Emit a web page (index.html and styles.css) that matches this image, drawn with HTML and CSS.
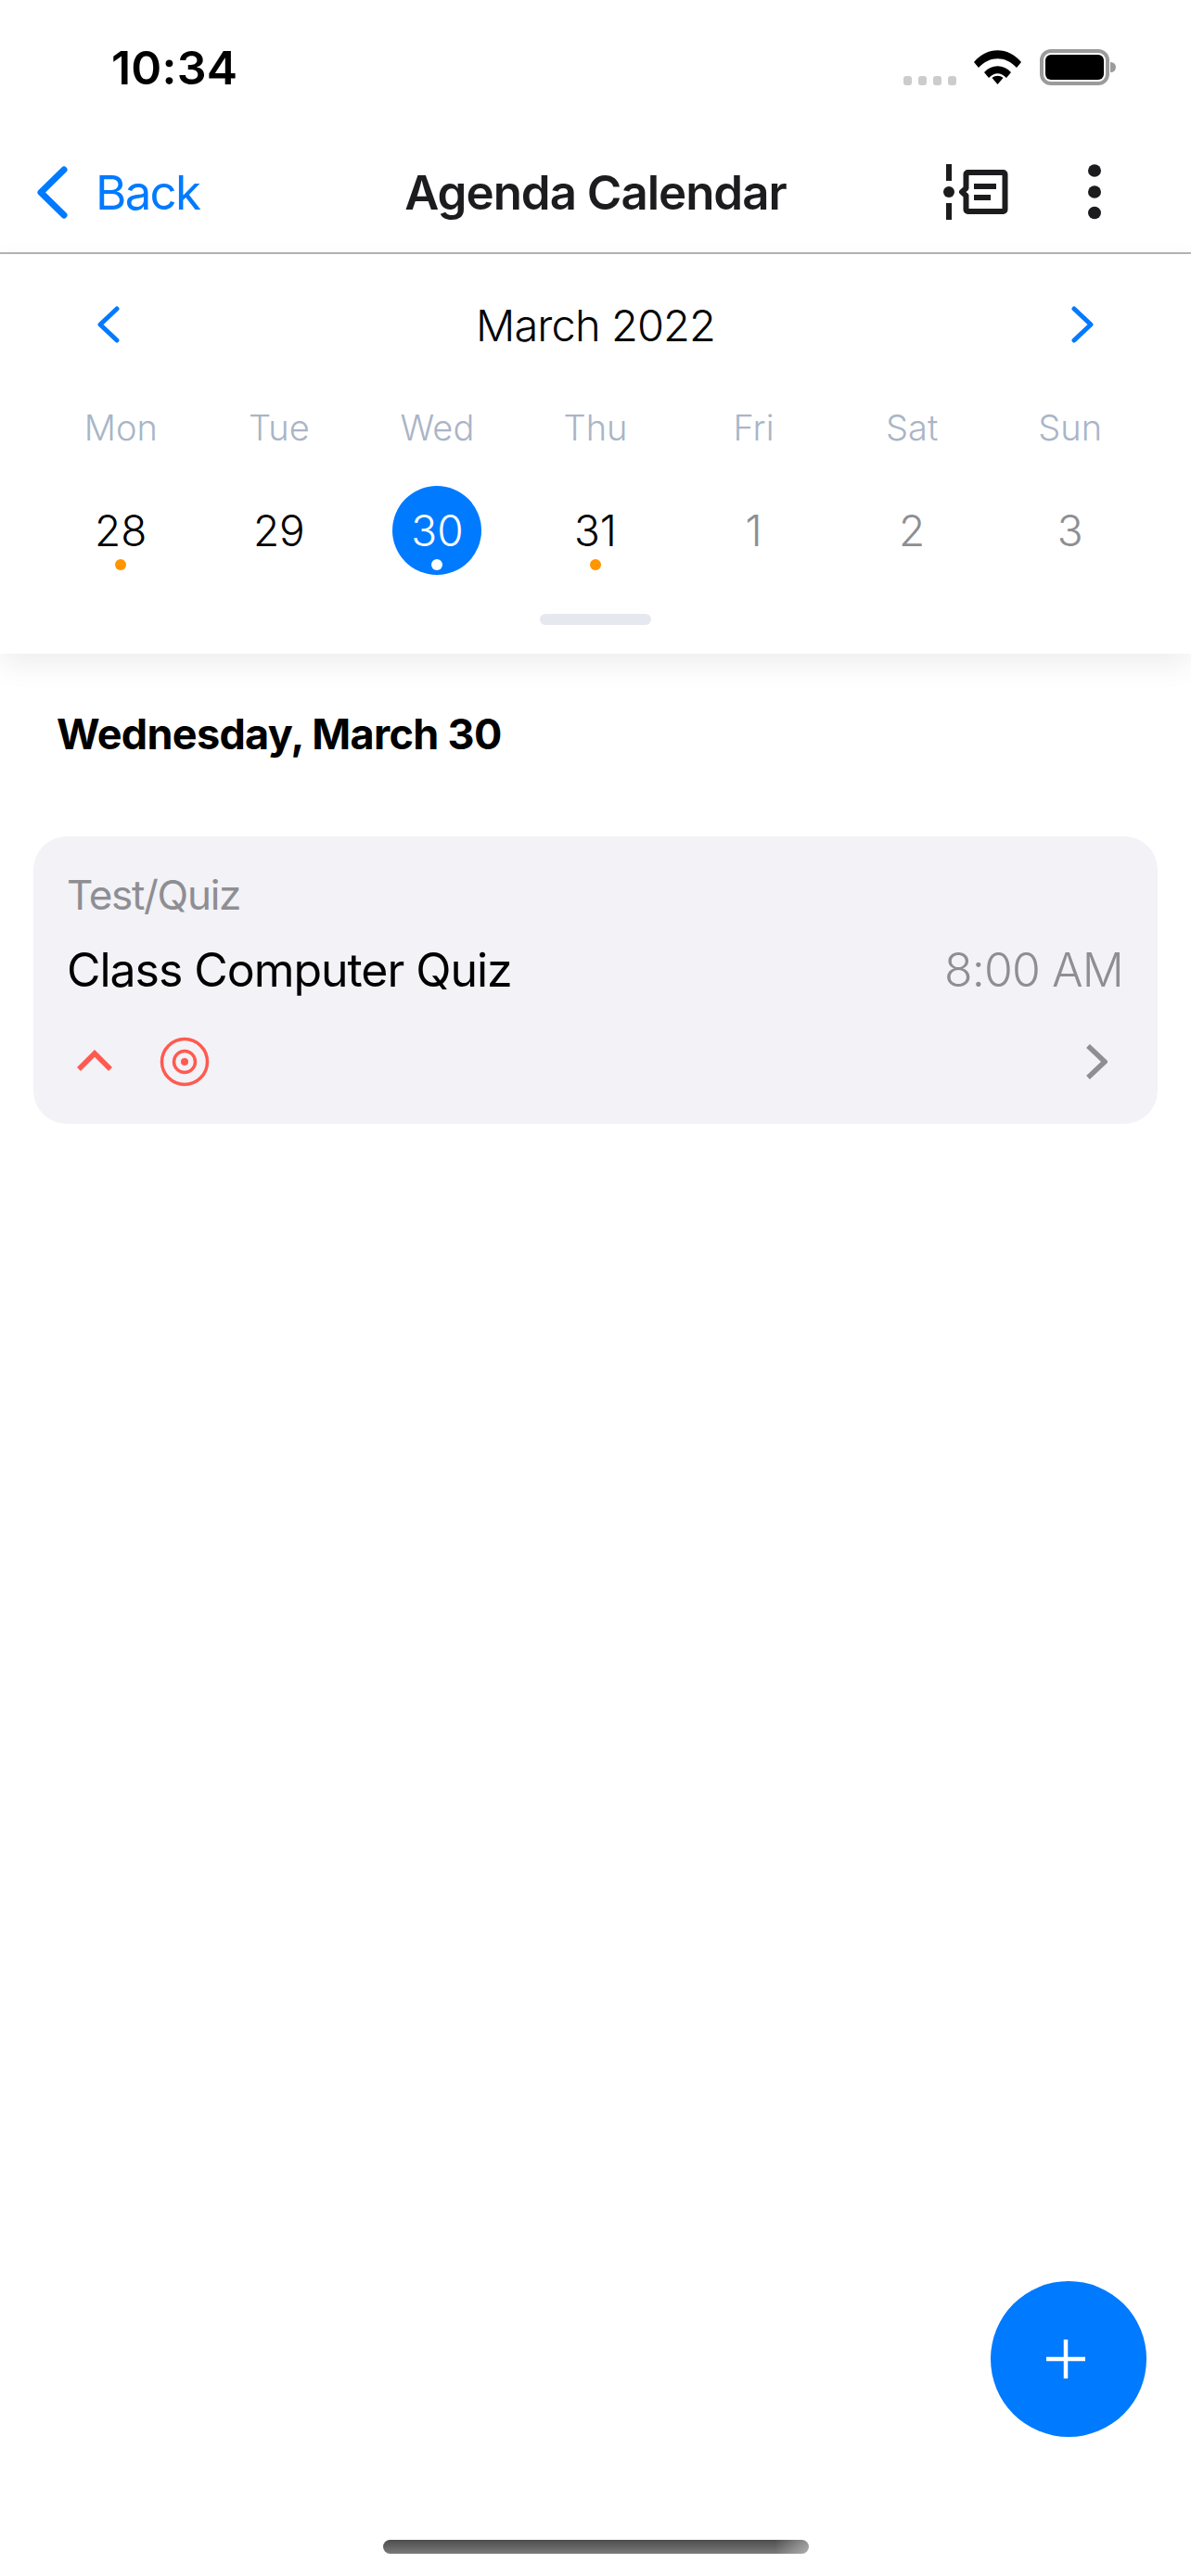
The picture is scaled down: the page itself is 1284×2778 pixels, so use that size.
FILE: index.html
```html
<!DOCTYPE html>
<html lang="en">
<head>
    <meta charset="UTF-8">
    <meta name="viewport" content="width=device-width, initial-scale=1.0">
    <title>Agenda Calendar</title>
    <link rel="stylesheet" href="styles.css">
</head>
<body>
    <div class="status-bar">
        <span class="status-time">10:34</span>
        <div class="status-icons">
            <div class="signal">
                <span></span><span></span><span></span><span></span>
            </div>
            <svg class="wifi" width="51" height="37" viewBox="0 0 51 37">
                <path d="M0 13C14 -4 37 -4 51 13L46 19C34 6 17 6 5 19Z"/>
                <path d="M11 24C19 15 32 15 40 24L35 30C29 23.5 22 23.5 16 30Z"/>
                <path d="M19.5 30C23 27 28 27 31.5 30L25.5 37Z"/>
            </svg>
            <div class="battery"><div class="battery-fill"></div></div>
        </div>
    </div>

    <header class="nav-bar">
        <a class="back-link" href="#">
            <svg width="33" height="57" viewBox="0 0 33 57" fill="none" stroke="#007aff" stroke-width="7" stroke-linecap="round" stroke-linejoin="round">
                <path d="M29 4L4 28.500L29 53"/>
            </svg>
            <span>Back</span>
        </a>
        <h1 class="nav-title">Agenda Calendar</h1>
        <div class="nav-actions">
            <svg width="73" height="60" viewBox="0 0 73 60" fill="none" stroke="#1c1c1e">
                <path d="M6 0V18M6 42V60" stroke-width="6"/>
                <circle cx="6" cy="30" r="6" fill="#1c1c1e" stroke="none"/>
                <path d="M26.500 9H64.500A2 2 0 0 1 66.500 11V49A2 2 0 0 1 64.500 51H26.500A2 2 0 0 1 24.500 49V34L20 30L24.500 26V11A2 2 0 0 1 26.500 9Z" stroke-width="6" stroke-linejoin="round"/>
                <path d="M33 24H57M33 36H51" stroke-width="6"/>
            </svg>
            <svg width="14" height="60" viewBox="0 0 14 60" fill="#1c1c1e">
                <ellipse cx="7" cy="7" rx="7" ry="6.700"/>
                <ellipse cx="7" cy="30" rx="7" ry="6.700"/>
                <ellipse cx="7" cy="52.500" rx="7" ry="6.700"/>
            </svg>
        </div>
    </header>

    <section class="calendar">
        <div class="month-row">
            <svg width="24" height="40" viewBox="0 0 24 40" fill="none" stroke="#007aff" stroke-width="5" stroke-linecap="round" stroke-linejoin="round">
                <path d="M21 3L3 20L21 37"/>
            </svg>
            <span class="month-name">March 2022</span>
            <svg width="24" height="40" viewBox="0 0 24 40" fill="none" stroke="#007aff" stroke-width="5" stroke-linecap="round" stroke-linejoin="round">
                <path d="M3 3L21 20L3 37"/>
            </svg>
        </div>
        <div class="week-row">
            <span>Mon</span>
            <span>Tue</span>
            <span>Wed</span>
            <span>Thu</span>
            <span>Fri</span>
            <span>Sat</span>
            <span>Sun</span>
        </div>
        <div class="date-row">
            <div class="date has-event">28</div>
            <div class="date">29</div>
            <div class="date selected has-event">30</div>
            <div class="date has-event">31</div>
            <div class="date other-month">1</div>
            <div class="date other-month">2</div>
            <div class="date other-month">3</div>
        </div>
        <div class="drag-handle"></div>
    </section>

    <h2 class="day-heading">Wednesday, March 30</h2>

    <div class="event-card">
        <div class="event-type">Test/Quiz</div>
        <div class="event-main">
            <span class="event-title">Class Computer Quiz</span>
            <span class="event-time">8:00 AM</span>
        </div>
        <div class="event-icons">
            <svg class="priority-icon" width="38" height="54" viewBox="0 0 38 54" fill="none" stroke="#ff5a50" stroke-width="5.500">
                <path d="M2 35L19 18L36 35"/>
            </svg>
            <svg width="54" height="54" viewBox="0 0 54 54" fill="none" stroke="#ff5a50">
                <circle cx="27" cy="27" r="24.500" stroke-width="3.500"/>
                <circle cx="27" cy="27" r="11.500" stroke-width="3.500"/>
                <circle cx="27" cy="27" r="4" fill="#ff5a50" stroke="none"/>
            </svg>
            <svg class="event-arrow" width="24" height="40" viewBox="0 0 24 40" fill="none" stroke="#8e8e93" stroke-width="5.500">
                <path d="M3 3L21 20L3 37"/>
            </svg>
        </div>
    </div>

    <button class="add-btn" type="button">
        <svg width="42" height="42" viewBox="0 0 42 42" stroke="#fff" stroke-width="4.500">
            <path d="M0 21H42M21 0V42"/>
        </svg>
    </button>

    <div class="home-indicator"></div>
</body>
</html>
```

FILE: styles.css
```css
body {
    font-family: Inter, "Noto Sans", sans-serif;
    position: relative;
    width: 1284px;
    height: 2778px;
    margin: 0;
    overflow: hidden;
    background-color: #fff;
    color: #000;
}

.status-bar {
    height: 120px;
    display: flex;
    justify-content: space-between;
    box-sizing: border-box;
    padding: 53px 88px 0 120px;
}

.status-time {
    font-size: 50px;
    font-weight: 600;
    line-height: 40px;
    letter-spacing: 0.2px;
}

.status-icons {
    display: flex;
    align-items: flex-end;
    height: 39px;
}

.signal {
    display: flex;
    gap: 7px;
    margin-right: 19px;
}

.signal span {
    width: 9px;
    height: 10px;
    border-radius: 3px;
    background-color: #ccc;
}

.wifi {
    margin-right: 20px;
    margin-bottom: 1px;
}

.battery {
    position: relative;
    width: 75px;
    height: 39px;
    box-sizing: border-box;
    padding: 2px;
    border: 4px solid #9b9b9b;
    border-radius: 12px;
}

.battery::after {
    content: "";
    position: absolute;
    top: 10px;
    right: -11px;
    width: 6px;
    height: 11px;
    border-radius: 0 6px 6px 0;
    background-color: #9b9b9b;
}

.battery-fill {
    height: 100%;
    border-radius: 6px;
    background-color: #000;
}

.nav-bar {
    height: 130px;
    padding-top: 22px;
    display: grid;
    grid-template-columns: 1fr auto 1fr;
    align-items: center;
    border-bottom: 2px solid #b4b4b4;
    background-color: #fff;
}

.back-link {
    display: flex;
    align-items: center;
    gap: 30px;
    padding-left: 40px;
    font-size: 51px;
    letter-spacing: -1.7px;
    color: #007aff;
    text-decoration: none;
}

.nav-title {
    margin: 0;
    font-size: 51px;
    font-weight: 600;
    color: #1c1c1e;
    letter-spacing: -1px;
}

.nav-actions {
    display: flex;
    align-items: center;
    justify-content: flex-end;
    gap: 83px;
    padding-right: 97px;
}

.calendar {
    box-sizing: border-box;
    height: 431px;
    padding-top: 56px;
    background-color: #fff;
    box-shadow: 0 12px 30px rgba(0, 0, 0, 0.07);
}

.month-row {
    display: flex;
    align-items: center;
    justify-content: space-between;
    height: 40px;
    padding: 0 105px;
}

.month-name {
    font-size: 47px;
    font-weight: 300;
    letter-spacing: -0.9px;
}

.week-row,
.date-row {
    display: grid;
    grid-template-columns: repeat(7, 1fr);
    justify-items: center;
    padding: 0 45px;
}

.week-row {
    margin-top: 66px;
    font-size: 38px;
    font-weight: 300;
    line-height: 50px;
    color: #a9b5c6;
}

.date-row {
    margin-top: 38px;
}

.date {
    position: relative;
    width: 96px;
    height: 96px;
    display: flex;
    align-items: center;
    justify-content: center;
    border-radius: 50%;
    font-size: 46px;
    font-weight: 300;
}

.date.has-event::after {
    content: "";
    position: absolute;
    top: 79px;
    left: 42px;
    width: 12px;
    height: 12px;
    border-radius: 50%;
    background-color: #ff9500;
}

.date.selected {
    background-color: #007aff;
    color: #fff;
}

.date.selected::after {
    background-color: #fff;
}

.date.other-month {
    color: #8e8e93;
}

.drag-handle {
    width: 120px;
    height: 12px;
    margin: 42px auto 0;
    border-radius: 6px;
    background-color: #e5e9ef;
}

.day-heading {
    margin: 57px 0 0 61px;
    font-size: 45px;
    font-weight: 700;
    line-height: 60px;
    letter-spacing: -0.7px;
}

.event-card {
    box-sizing: border-box;
    height: 310px;
    margin: 80px 36px 0;
    padding: 37px 37px 0 36px;
    border-radius: 36px;
    background-color: #f2f2f7;
}

.event-type {
    font-size: 44px;
    line-height: 52px;
    letter-spacing: -1.3px;
    color: #8e8e93;
}

.event-main {
    display: flex;
    justify-content: space-between;
    margin-top: 25px;
    font-size: 50px;
    line-height: 60px;
}

.event-title {
    letter-spacing: -1.05px;
}

.event-time {
    color: #8e8e93;
    font-weight: 300;
    letter-spacing: -0.9px;
}

.event-icons {
    display: flex;
    align-items: center;
    gap: 51px;
    height: 54px;
    margin-top: 42px;
}

.priority-icon {
    margin-left: 11px;
}

.event-arrow {
    margin-left: auto;
    margin-right: 17px;
}

.add-btn {
    position: absolute;
    left: 1068px;
    top: 2460px;
    width: 168px;
    height: 168px;
    display: flex;
    align-items: center;
    justify-content: center;
    padding: 0 7px 0 0;
    border: none;
    border-radius: 50%;
    background-color: #007aff;
}

.home-indicator {
    position: absolute;
    left: 413px;
    top: 2739px;
    width: 459px;
    height: 15px;
    border-radius: 8px;
    background:
        linear-gradient(to right, rgba(255, 255, 255, 0) 92%, rgba(255, 255, 255, 0.4)),
        linear-gradient(to bottom, #4d4d4d, #7a7a7a);
}
```
